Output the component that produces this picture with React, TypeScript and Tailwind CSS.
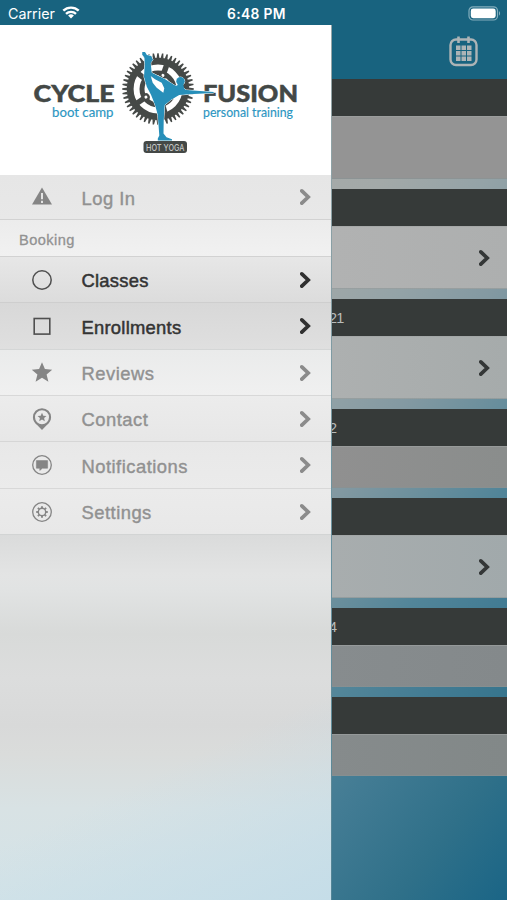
import type { ReactNode } from 'react';
import clsx from 'clsx';

type MenuItem = {
  label: string;
  icon: ReactNode;
  className: string;
  active?: boolean;
};

const TEETH = Array.from({ length: 48 }, (_, i) => i * 7.5);
const SPOKES = Array.from({ length: 5 }, (_, i) => i * 72 + 20);

function Chevron({ className }: { className?: string }) {
  return (
    <svg viewBox="0 0 12 18" className={clsx('h-[18px] w-3 shrink-0', className)} fill="none" stroke="currentColor" strokeWidth="3.7">
      <path d="M1.8 2.9 8.2 9 1.8 15.1" strokeLinecap="round" strokeLinejoin="miter" />
    </svg>
  );
}

function WarningIcon() {
  return (
    <svg viewBox="0 0 22 22" className="size-[22px]" fill="currentColor">
      <path d="M11 1.4 21 18.6H1Z" />
      <path d="M11 7v6.2M11 14.8v2.1" stroke="#e4e4e4" strokeWidth="2" />
    </svg>
  );
}

function CircleIcon() {
  return (
    <svg viewBox="0 0 22 22" className="size-[22px]" fill="none" stroke="currentColor" strokeWidth="1.5">
      <circle cx="11" cy="11" r="9.2" />
    </svg>
  );
}

function SquareIcon() {
  return (
    <svg viewBox="0 0 22 22" className="size-[22px]" fill="none" stroke="currentColor" strokeWidth="1.6">
      <rect x="3.2" y="3.5" width="15.6" height="15.6" />
    </svg>
  );
}

function StarIcon() {
  return (
    <svg viewBox="0 0 22 22" className="size-[22px]" fill="currentColor">
      <path d="m11 .2 2.9 6.900 7.300.6-5.600 4.800 1.800 7.200-6.400-3.900-6.400 3.900 1.800-7.200L.8 7.700l7.300-.6Z" />
    </svg>
  );
}

function PinIcon() {
  return (
    <svg viewBox="0 0 22 22" className="size-[22px]" fill="currentColor">
      <path
        fillRule="evenodd"
        d="M11 .2a9.1 9.1 0 0 1 9.1 9.1c0 3.6-2 6-4.500 8L11 22l-4.600-4.700c-2.500-2-4.500-4.400-4.500-8A9.100 9.100 0 0 1 11 .2Zm0 2.100a7 7 0 1 0 0 14 7 7 0 0 0 0-14Z"
      />
      <path d="m11 4.800 1.300 2.900 3.200.3-2.400 2.100.7 3.100-2.800-1.600-2.800 1.600.7-3.100L6.500 8l3.200-.3Z" />
    </svg>
  );
}

function MessageIcon() {
  return (
    <svg viewBox="0 0 22 22" className="size-[22px]" fill="currentColor">
      <circle cx="11" cy="11" r="9.300" fill="none" stroke="currentColor" strokeWidth="1.300" />
      <path d="M5.400 6.600h11.200v7.600h-5.200L8.800 16.400v-2.200H5.400Z" stroke="currentColor" strokeWidth=".6" strokeLinejoin="round" />
    </svg>
  );
}

function SettingsIcon() {
  return (
    <svg viewBox="0 0 22 22" className="size-[22px]" fill="none" stroke="currentColor">
      <circle cx="11" cy="11" r="9.300" strokeWidth="1.300" />
      <circle cx="11" cy="11" r="3.700" strokeWidth="1.400" />
      {[0, 45, 90, 135, 180, 225, 270, 315].map((angle) => (
        <path key={angle} d="M11 7.300V5.200" strokeWidth="1.900" transform={`rotate(${angle} 11 11)`} />
      ))}
    </svg>
  );
}

const loginItem: MenuItem = {
  label: 'Log In',
  icon: <WarningIcon />,
  className: 'h-[45px] border-b border-[#d2d2d2] bg-linear-to-b from-[#e6e6e6] to-[#e8e8e8]',
};

const bookingItems: MenuItem[] = [
  { label: 'Classes', icon: <CircleIcon />, active: true, className: 'h-[46px] border-t border-[#d2d2d2] bg-linear-to-b from-[#e7e7e7] to-[#dcdcdc]' },
  { label: 'Enrollments', icon: <SquareIcon />, active: true, className: 'h-[47px] border-t border-[#cecece] bg-linear-to-b from-[#d8d8d8] to-[#dfdfdf]' },
  { label: 'Reviews', icon: <StarIcon />, className: 'h-[46px] border-t border-[#d4d6d6] bg-linear-to-b from-[#eaebeb] to-[#f0f0f0]' },
  { label: 'Contact', icon: <PinIcon />, className: 'h-[46px] border-t border-[#d8d8d8] bg-linear-to-b from-[#ececec] to-[#e7e7e7]' },
  { label: 'Notifications', icon: <MessageIcon />, className: 'h-[47px] border-t border-[#d6d6d6] bg-linear-to-b from-[#e8e8e8] to-[#ebebeb]' },
  { label: 'Settings', icon: <SettingsIcon />, className: 'h-[46px] border-t border-[#d8d8d8] bg-linear-to-b from-[#ebebeb] to-[#e8e8e8]' },
];

// the schedule behind the drawer, one day per section
const days = [
  { date: '', row: 'h-[63px] bg-[#949494]', gap: 'h-[10px]', open: false },
  { date: '', row: 'h-[63px] bg-linear-to-r from-[#b1b2b2] to-[#adafaf]', gap: 'h-[10px]', open: true },
  { date: '21', row: 'h-[63px] bg-linear-to-r from-[#adb0b0] to-[#a6abab]', gap: 'h-[10px]', open: true },
  { date: '2', row: 'h-[42px] bg-linear-to-r from-[#909090] to-[#8a8d8c]', gap: 'h-[10px]', open: false },
  { date: '', row: 'h-[63px] bg-linear-to-r from-[#a8adae] to-[#a1a9ab]', gap: 'h-[10px]', open: true },
  { date: '4', row: 'h-[42px] bg-linear-to-r from-[#878c8e] to-[#84898b]', gap: 'h-[10px]', open: false },
  { date: '', row: 'h-[42px] bg-linear-to-r from-[#868b8c] to-[#828888]', gap: 'h-0', open: false },
];

function StatusBar() {
  return (
    <div className="grid h-[25px] shrink-0 grid-cols-3 items-center bg-[#18637f] pt-[2px] pr-[6px] pl-2 font-['Inter',sans-serif] text-white">
      <div className="flex items-center gap-[7px]">
        <span className="text-[14.3px] leading-4">Carrier</span>
        <svg viewBox="0 0 18 13" className="mb-[2px] h-[13px] w-[18px]" fill="none" stroke="#fff" strokeWidth="2.400">
          <path d="M1.300 4.700a11.200 11.200 0 0 1 15.400 0M4 7.900a7.300 7.300 0 0 1 10 0" />
          <path d="m9 12.600-2.900-3a4.300 4.300 0 0 1 5.800 0Z" fill="#fff" stroke="none" />
        </svg>
      </div>
      <span className="pl-[4px] text-center text-[13.8px] leading-4 font-semibold tracking-[0.35px]">6:48 PM</span>
      <svg viewBox="0 0 33 15" className="h-[15px] w-[33px] justify-self-end">
        <rect x="1" y=".8" width="28.500" height="13.200" rx="4" fill="none" stroke="#83aebd" strokeWidth="1.200" />
        <rect x="2.800" y="2.600" width="24.900" height="9.600" rx="2.400" fill="#fff" />
        <path d="M31 5.300v4.200c1.400-.5 1.400-3.700 0-4.200Z" fill="#83aebd" />
      </svg>
    </div>
  );
}

function Logo() {
  return (
    <svg viewBox="0 25 331 150" className="h-[150px] w-full shrink-0 bg-white" fill="none">
      <g fill="#434846" stroke="#434846" strokeWidth=".5" fontFamily="Lato, sans-serif" fontWeight="900" fontSize="23.500">
        <text x="33.500" y="102" textLength="81" lengthAdjust="spacingAndGlyphs">CYCLE</text>
        <text x="203" y="102" textLength="95" lengthAdjust="spacingAndGlyphs">FUSION</text>
      </g>
      <g fill="#2c96c2" stroke="#2c96c2" strokeWidth=".15" fontFamily="Lato, sans-serif" fontSize="12.500">
        <text x="52" y="117" textLength="61.500" lengthAdjust="spacingAndGlyphs">boot camp</text>
        <text x="203" y="117" textLength="90" lengthAdjust="spacingAndGlyphs">personal training</text>
      </g>

      <g transform="translate(158 89)" stroke="#454947">
        {TEETH.map((angle) => (
          <path key={angle} d="M-1.500-30.500-.7-35.800h1.400L1.500-30.500Z" fill="#454947" stroke="none" transform={`rotate(${angle})`} />
        ))}
        <circle r="27.800" strokeWidth="6.800" />
        <circle r="16" strokeWidth="5" />
        {SPOKES.map((angle) => (
          <g key={angle} transform={`rotate(${angle})`}>
            <path d="M0-14v-11" strokeWidth="5.500" />
            <circle cy="-14.500" r="3.800" fill="#454947" stroke="none" />
            <circle cy="-14.500" r="1.500" fill="#fff" stroke="none" />
          </g>
        ))}
      </g>

      <g fill="#278fb9" stroke="#fff" strokeWidth="1" strokeLinejoin="round" paintOrder="stroke">
        <path
          d="M142.300 52h2.700l1.900 2.900 4.400 1 1.600 3.800-2.200 3.200 1 9.800 13.500 6.600 9.500 6 7 1.600 4.500 3.100 27.500 2v1l-25 1.300-9.500.7-8.500 5-6 5-1 14.500-.2 14 3 3.800 5.500 2v1.300h-14.200v-2l1.500-3-1.500-20.500-2.700-10-4-10-4.300-8.300-2.800-10 .8-12.700-.4-6.700-2.200-2.700ZM150.700 76l2 6.700 4 5 6.600 5 1-4.400-2.600-5.600-6.700-3.400Z"
          fillRule="evenodd"
        />
        <circle cx="180.500" cy="81.300" r="4.200" />
        <path d="m175.500 87.500 3-3.800h4.600l1.300 6-5.400 1Z" stroke="none" />
      </g>

      <rect x="143.500" y="141" width="43.500" height="12" rx="3" fill="#444846" />
      <text x="146" y="150.500" textLength="38.500" lengthAdjust="spacingAndGlyphs" fill="#c3c5c4" fontFamily="Inter, sans-serif" fontWeight="500" fontSize="9.500">
        HOT YOGA
      </text>
    </svg>
  );
}

function MenuRow({ label, icon, className, active }: MenuItem) {
  return (
    <div className={clsx('flex shrink-0 items-center pr-[19px] pl-[31px]', className)}>
      <span className={active ? 'text-[#4f4f4f]' : 'text-[#858585]'}>{icon}</span>
      <span
        className={clsx(
          'ml-[28.5px] flex-1 pt-[3px] text-[18.4px] leading-6',
          active
            ? 'tracking-[0.25px] text-[#343434] [-webkit-text-stroke:0.5px_#343434]'
            : 'tracking-[0.48px] text-[#919191] [-webkit-text-stroke:0.4px_#919191]',
        )}
      >
        {label}
      </span>
      <Chevron className={active ? 'text-[#303030]' : 'text-[#8b8b8b]'} />
    </div>
  );
}

function Drawer() {
  return (
    <aside className="flex w-[331px] shrink-0 flex-col">
      <Logo />
      <MenuRow {...loginItem} />
      <div className="flex h-[36px] shrink-0 items-center bg-linear-to-b from-[#ececec] to-[#f1f1f1] pt-[5px] pl-[19px] text-[14.6px] tracking-[0.45px] text-[#929292] [-webkit-text-stroke:0.3px_#929292]">
        Booking
      </div>
      {bookingItems.map((item) => (
        <MenuRow key={item.label} {...item} />
      ))}
      <div className="relative flex-1 border-t border-[#d2d4d4] bg-[linear-gradient(180deg,#dadbdb_0%,#e3e4e4_11%,#e1e3e3_15%,#d8dad9_27%,#dcdddd_39%,#d8d9d9_52%,#dadcdb_60%,#d8e2e4_75%,#d3e3e8_100%)]">
        <div className="absolute inset-0 bg-[linear-gradient(155deg,transparent_60%,#c5dde8_100%)]" />
      </div>
    </aside>
  );
}

function Schedule() {
  return (
    <main className="flex flex-1 flex-col overflow-hidden border-l border-[#8ba3a8]/50 bg-[linear-gradient(128deg,#a8abaa_0%,#a3a9a8_20%,#94a3a7_32%,#8399a2_43%,#6d909d_52%,#528599_62%,#437c94_72%,#2f7089_87%,#1a6586_100%)]">
      <header className="flex h-[54px] shrink-0 justify-end bg-[#18637f] pt-[11px] pr-[29px]">
        <svg viewBox="0 0 29 31" className="h-[31px] w-[29px]" fill="none" stroke="#adb4b6">
          <rect x="1.500" y="3.500" width="26" height="25.500" rx="5.500" strokeWidth="2.400" />
          <path d="M9.500 .5v6.500M19.500 .5v6.500" strokeWidth="2.600" />
          <path d="M7 11.800h15.500M7 17.300h15.500M7 22.800h15.500" strokeWidth="4.500" strokeDasharray="4.500 1" />
        </svg>
      </header>
      {days.map(({ date, row, gap, open }, i) => (
        <section key={i} className="shrink-0">
          <div className="-ml-[3px] flex h-[37px] items-center bg-[#363a39] pt-[2px] text-[14.5px] tracking-[-0.7px] text-[#b9bdbc]">{date}</div>
          <div className={clsx('flex items-center justify-end border-y border-t-[#a0a3a3]/60 border-b-[#879295]/60 pr-[16px]', row)}>
            {open && <Chevron className="text-[#343737]" />}
          </div>
          <div className={gap} />
        </section>
      ))}
    </main>
  );
}

export default function App() {
  return (
    <div className="flex h-[900px] w-[507px] flex-col overflow-hidden bg-[#e3e3e3] font-['Liberation_Sans',Arial,sans-serif]">
      <StatusBar />
      <div className="flex min-h-0 flex-1">
        <Drawer />
        <Schedule />
      </div>
    </div>
  );
}
